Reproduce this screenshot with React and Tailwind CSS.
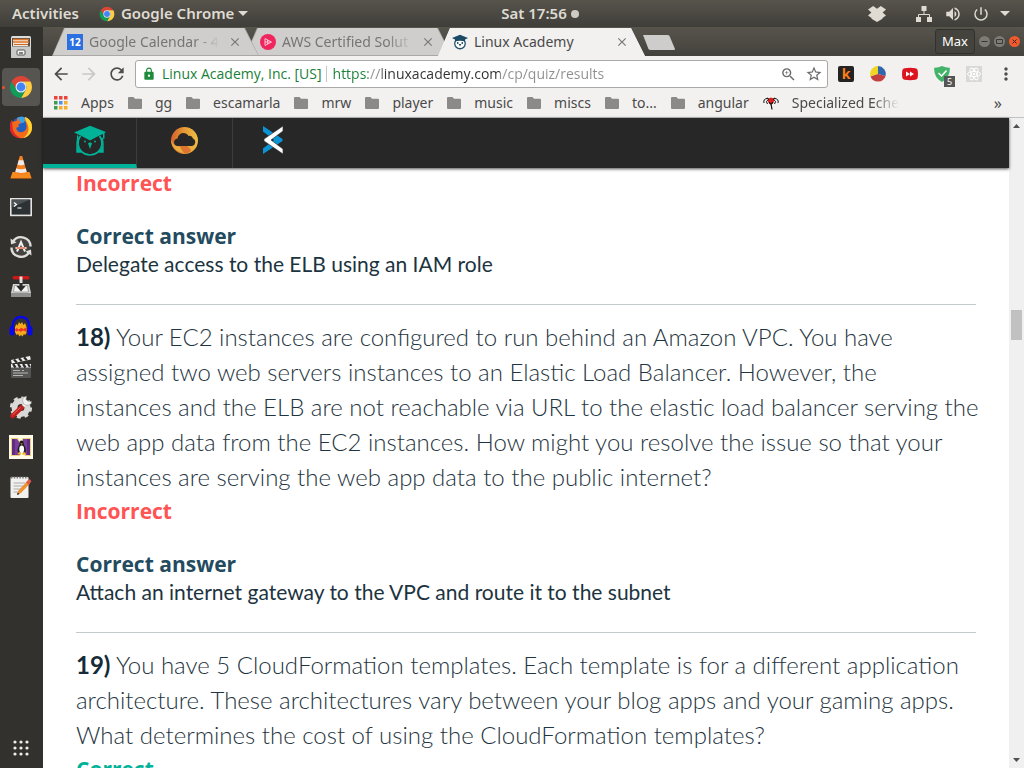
import React from "react";
import { MdArrowBack, MdArrowForward, MdRefresh, MdLock, MdStarBorder, MdZoomIn, MdClose, MdMoreVert, MdPowerSettingsNew, MdVolumeUp } from "react-icons/md";

function ChromeIcon({ className }) {
  const arc = "M24 13H43.05A22 22 0 0 0 4.95 13L14.47 29.5A11 11 0 0 1 24 13z";
  return (
    <svg viewBox="0 0 48 48" className={className} aria-hidden="true">
      <path d={arc} fill="#db4437" />
      <path d={arc} fill="#ffcd40" transform="rotate(120 24 24)" />
      <path d={arc} fill="#0f9d58" transform="rotate(240 24 24)" />
      <circle cx="24" cy="24" r="11" fill="#f1f1f1" />
      <circle cx="24" cy="24" r="8.8" fill="#4285f4" />
    </svg>
  );
}

function Icon({ size = "size-6", box = "0 0 24 24", children }) {
  return (
    <svg viewBox={box} className={`${size} shrink-0`} aria-hidden="true">
      {children}
    </svg>
  );
}

const dock = [
  {
    name: "Files",
    icon: (
      <Icon>
        <rect x="2" y="1" width="20" height="22" rx="1.5" fill="#dcdcda" />
        <rect x="3" y="3" width="18" height="8.5" fill="#55504a" />
        <path d="M4 5h15v6H4z" fill="#f4e6d2" />
        <path d="M4 4.5h16M4 7h16" stroke="#e0762c" strokeWidth="1.5" />
        <path d="M5 9.500h14" stroke="#c96a2c" />
        <rect x="2" y="12" width="20" height="11" rx="1" fill="#c9c9c7" />
        <rect x="8" y="15" width="8" height="5" rx="1" fill="#f4f4f4" stroke="#555" />
        <path d="M10 18h4" stroke="#444" strokeWidth="1.3" />
      </Icon>
    ),
  },
  { name: "Google Chrome", active: true, icon: <ChromeIcon className="size-6" /> },
  {
    name: "Firefox",
    icon: (
      <Icon>
        <circle cx="12.5" cy="11" r="9.500" fill="#1f5fc4" />
        <path d="M8 3c3-2 7-1.5 9 .5l-2 4-4 1z" fill="#35a5ea" />
        <path d="M16 2c5 2 7.5 6 7 11.500C22.400 19.500 17.500 23.300 12 23.300S1.500 19 1 13c-.2-3.200.6-6 2-8l.8 2.200C5 6 6.300 5.700 7.500 6c.2-1.600 1-2.700 2.200-3.200-.4 2 .3 3.400 2.300 4.200.3 1.200-2.200 1.600-2.500 2.700-.1 1 .6 1.600.2 2.600-1.200-.2-2 0-2.400 1 .5 2.700 2.700 4.200 5.200 3.900 3-.3 5-2.600 5-5.700C17.500 8 16 6 15.500 5z" fill="#f26a1b" />
        <path d="M16 2c5 2 7.500 6 7 11.500-.5 5-4 8.800-9 9.600 3.500-2 5.500-5.500 5.500-9.600C19.500 9 16 6 16 2z" fill="#ffd22e" />
        <path d="M1 13c.3 6 5 10.300 11 10.300-4-2-8-5-8.500-11L3 5C1.600 7.200.9 10 1 13z" fill="#e2232e" />
      </Icon>
    ),
  },
  {
    name: "VLC media player",
    icon: (
      <Icon>
        <path d="M3.500 17h17l2 6h-21z" fill="#f58a1f" />
        <path d="M10.800 1h2.400l5 17.500c-2 2-10.400 2-12.400 0z" fill="#f58220" />
        <path d="M9.700 5.200h4.600l1.200 4.200c-1.500 1-5.500 1-7 0zM7.300 13.200c2 1.300 7.400 1.300 9.400 0l1 3.500c-2.400 1.600-9 1.600-11.400 0z" fill="#ececec" />
        <path d="M1.500 23h21v.8h-21z" fill="#b85a0c" />
      </Icon>
    ),
  },
  {
    name: "Terminal",
    icon: (
      <Icon>
        <rect x="1.800" y="3.800" width="20.400" height="16.600" fill="#2c3133" stroke="#e4e4e2" strokeWidth="1.600" />
        <path d="M2.600 4.600h18.800l-18.800 8z" fill="#4c5254" />
        <path d="M5 7.500l2.500 2L5 11.500M8.500 13h4" stroke="#fff" strokeWidth="1.200" fill="none" />
      </Icon>
    ),
  },
  {
    name: "Software Updater",
    icon: (
      <Icon>
        <circle cx="12" cy="12" r="9" fill="#45433f" />
        <path d="M4 6.500a9.600 9.600 0 0 1 17.600 5M20 17.500A9.600 9.600 0 0 1 2.400 12.500" stroke="#dededc" strokeWidth="2.400" fill="none" />
        <path d="M1.500 3.500l.5 6 5.500-2zM22.500 20.500l-.5-6-5.500 2z" fill="#dededc" />
        <path d="M8 16.500l4-9.500 4 9.500" stroke="#eee" strokeWidth="2" fill="none" />
        <path d="M6.500 13h11" stroke="#eee" strokeWidth="2" />
        <path d="M7.500 13h9" stroke="#df4b20" strokeWidth="1.200" />
      </Icon>
    ),
  },
  {
    name: "Disk Recovery",
    icon: (
      <Icon>
        <path d="M4 9h16l2 9v4H2v-4z" fill="#d6d6d4" />
        <path d="M2 18h20v4H2z" fill="#8f8f8d" />
        <path d="M5.500 10.500h13l1 6.500h-15z" fill="#f3f3f1" stroke="#777" strokeWidth=".6" />
        <rect x="3.500" y="1" width="17" height="3.500" rx="1.700" fill="#c81818" />
        <path d="M10.500 4h3v7h3.200L12 16.500 7.300 11h3.200z" fill="#2b2b2b" />
        <path d="M10.500 1.500h3V8h-3z" fill="#ddd" />
      </Icon>
    ),
  },
  {
    name: "Audacity",
    icon: (
      <Icon>
        <path d="M4 13C3 6 7 2 12 2s9 4 8 11" stroke="#0808e8" strokeWidth="2.400" fill="none" />
        <path d="M6 12l1.500-3 1 1.500L10 7l1.500 2L13 7l1.500 3L16 8l1.500 4v6L16 20l-1-1-1.500 2.500L12 20l-1.500 1.500L9 19l-1.500 1L6 17z" fill="#f5a81c" />
        <path d="M5.500 15l2-2 2 1.500 3-1.800 2 1.500 2-1.700 2 2.500-2 1.500-2-1-3 1.300-2-1.200-2 1z" fill="#ee3522" />
        <rect x="0.500" y="11" width="5" height="9.500" rx="2.500" fill="#0808e8" />
        <rect x="18.500" y="11" width="5" height="9.500" rx="2.500" fill="#0808e8" />
      </Icon>
    ),
  },
  {
    name: "Video Editor",
    icon: (
      <Icon>
        <path d="M2 5l19-4 .8 3.500-19 4z" fill="#f0f0ee" />
        <path d="M5 4.400l2.800 3M10 3.300l2.800 3M15 2.200l2.800 3" stroke="#2a2a2a" strokeWidth="2.200" />
        <rect x="2" y="9" width="20" height="14" rx="1" fill="#555653" />
        <path d="M2 9h20v3.500H2z" fill="#f0f0ee" />
        <path d="M4 9l2.500 3.500M9 9l2.500 3.500M14 9l2.500 3.500M19 9l2 3" stroke="#2a2a2a" strokeWidth="2.200" />
        <path d="M4 15.500h7M13 15.500h2M4 18h15M4 20.500h10" stroke="#c2c2c0" strokeWidth=".9" />
      </Icon>
    ),
  },
  {
    name: "System Settings",
    icon: (
      <Icon>
        <circle cx="12" cy="12.500" r="6.500" fill="none" stroke="#d9d9d7" strokeWidth="6" />
        <circle cx="12" cy="12.500" r="9.800" fill="none" stroke="#d9d9d7" strokeWidth="2.600" strokeDasharray="4 3.700" />
        <path d="M10.500 14.500L18 7" stroke="#f2f2f0" strokeWidth="3.200" />
        <path d="M22.500 6.500a4.500 4.500 0 1 1-5-5.200L17 4.500l2 2z" fill="#f2f2f0" stroke="#8a8a88" strokeWidth=".5" />
        <path d="M3.500 21l9-8.500" stroke="#c41d1d" strokeWidth="4.600" strokeLinecap="round" />
        <path d="M3.500 20l8-7.500" stroke="#ea6a5f" strokeWidth="1" />
      </Icon>
    ),
  },
  {
    name: "NetBeans Linux",
    icon: (
      <Icon>
        <path d="M0 0h24v24H0z" fill="#fffbe9" />
        <path d="M2 3h7l2 4v14H2zM13 3h9v18h-6l-3-5z" fill="#f0cf7e" />
        <path d="M3 4h5l3 4v12H3zM14 4h7v16h-4l-3-5z" fill="#7a3d9a" />
        <path d="M3 4h3v16H3zM18 4h3v16h-3z" fill="#5d2b80" />
        <path d="M12.500 5.500c2 0 2.300 2 2.300 4 1.700 2.500 2.700 5 1.700 8h-7.500c-1-3 0-5.500 1.500-8 0-2 .2-4 2-4z" fill="#1c1c1c" />
        <ellipse cx="12.700" cy="14.300" rx="2.400" ry="3.700" fill="#fff" />
        <path d="M8.500 18.800l2-2 2 2.200-1.500 1zM17 18.800l-2-2-2 2.200 1.500 1zM11.300 8.500h2.500l-1.200 1.300z" fill="#f4b51e" />
      </Icon>
    ),
  },
  {
    name: "Text Editor",
    icon: (
      <Icon>
        <rect x="1.500" y="2" width="18" height="21" rx="1" fill="#f1f1ef" />
        <path d="M2 2.500h17" stroke="#777" strokeWidth="2" strokeDasharray="1.500 1.300" />
        <path d="M4.500 8h12M4.500 11h10M4.500 14h8M4.500 17h6" stroke="#aaaaa8" />
        <path d="M8 20l1.500-4.500 9-9.500 2.500 2.500-9 9.500z" fill="#ef9231" />
        <path d="M17 7.300l2.500-2.700c1-1 3.400 1.200 2.500 2.300L19.500 9.700z" fill="#e05a4c" />
        <path d="M8 20l.8-2.500 1.700 1.600z" fill="#222" />
      </Icon>
    ),
  },
];

const bookmarks = ["gg", "escamarla", "mrw", "player", "music", "miscs", "to...", "angular"];

function AcademyFavicon() {
  return (
    <Icon size="size-4" box="0 0 32 32">
      <circle cx="16" cy="19" r="10.500" fill="#fff" stroke="#26506b" strokeWidth="2.600" />
      <path d="M0 8l16-6.500L32 8l-6 3v4c-6-2-14-2-20 0v-4z" fill="#1c4a66" />
      <circle cx="11.500" cy="18" r="1.800" fill="#1c4a66" />
      <circle cx="20.500" cy="18" r="1.800" fill="#1c4a66" />
      <path d="M13.500 20h5L16 25z" fill="#1c4a66" />
    </Icon>
  );
}

const tabs = [
  {
    title: "Google Calendar - 4",
    z: "z-20",
    icon: (
      <span className="flex size-4 shrink-0 items-center justify-center bg-[#2a70e0] text-[10px] leading-4 font-bold text-white">12</span>
    ),
  },
  {
    title: "AWS Certified Solut",
    z: "z-10",
    icon: (
      <Icon size="size-4" box="0 0 16 16">
        <circle cx="8" cy="8" r="8" fill="#f0245e" />
        <path d="M5 4.500L11.500 8 5 11.500zM5 8h6M7.500 6v4" fill="none" stroke="#ffc3d3" />
      </Icon>
    ),
  },
  { title: "Linux Academy", active: true, z: "z-30", icon: <AcademyFavicon /> },
];

function Tab({ title, icon, active, z }) {
  return (
    <div
      className={`relative -mr-[14px] h-7 w-[207px] [clip-path:polygon(0_100%,12px_0,calc(100%-14px)_0,100%_100%)] ${z} ${active ? "bg-[#f2f1f0]" : "bg-[#a9a8a6] px-px pb-px"}`}
    >
      <div
        role="tab"
        aria-selected={!!active}
        className={`flex h-full items-center pl-[14px] pr-4 [clip-path:polygon(0_100%,12px_0,calc(100%-14px)_0,100%_100%)] ${active ? "bg-[#f2f1f0] text-[#4a4a4a]" : "bg-[#d0cecc] text-[#777573]"}`}
      >
        {icon}
        <span
          className={`ml-1.5 flex-1 overflow-hidden text-sm whitespace-nowrap ${active ? "" : "[mask-image:linear-gradient(to_right,#000_80%,transparent)]"}`}
        >
          {title}
        </span>
        <button aria-label={`Close ${title}`} className="ml-2 text-[#777]">
          <MdClose className="size-3.5" />
        </button>
      </div>
    </div>
  );
}

function TopBar() {
  return (
    <header className="grid h-[27px] shrink-0 grid-cols-[1fr_auto_1fr] items-center bg-linear-to-b from-[#57544c] to-[#403e39] text-[15px] font-semibold text-[#dfdbd2]">
      <div className="flex items-center">
        <button className="ml-3">Activities</button>
        <button className="ml-5 flex items-center">
          <ChromeIcon className="mr-1.5 size-4" />
          Google Chrome
          <Icon size="ml-1 h-[5px] w-2.5" box="0 0 10 5">
            <path d="M0 0h10L5 5z" fill="#dfdbd2" />
          </Icon>
        </button>
      </div>
      <button className="ml-14 flex items-center gap-1">
        Sat 17:56 <span className="size-2 rounded-full bg-[#cfcbc3]" />
      </button>
      <div className="flex items-center justify-end pr-3.5">
        <button aria-label="Dropbox" className="mr-[30px]">
          <Icon size="h-4 w-[18px]" box="0 0 18 16">
            <path d="M5.200 0L9 2.700 12.800 0 18 3.500 14.600 6.500 18 9.600 14.500 12v.8L9 16l-5.500-3.200V12L0 9.600l3.400-3.100L0 3.500z" fill="#dfdbd2" />
          </Icon>
        </button>
        <button aria-label="Network" className="mr-3">
          <Icon size="size-4" box="0 0 16 16">
            <path d="M5.500 0h5v5h-5zM0 11h5v5H0zM11 11h5v5h-5z" fill="#dfdbd2" />
            <path d="M8 5v3M2.500 11V8.500h11V11" stroke="#dfdbd2" fill="none" />
          </Icon>
        </button>
        <button aria-label="Volume" className="mr-2.5">
          <MdVolumeUp className="size-[18px]" />
        </button>
        <button aria-label="Power" className="mr-2.5">
          <MdPowerSettingsNew className="size-[18px]" />
        </button>
        <Icon size="h-[5px] w-2.5" box="0 0 10 5">
          <path d="M0 0h10L5 5z" fill="#dfdbd2" />
        </Icon>
      </div>
    </header>
  );
}

function Dock() {
  return (
    <nav aria-label="Dock" className="flex w-[43px] shrink-0 flex-col bg-[#33312d]">
      {dock.map(({ name, icon, active }) => (
        <div key={name} className="flex h-10 shrink-0 items-center pl-0.5">
          <button
            aria-label={name}
            className={`relative flex size-[38px] items-center justify-center rounded-sm ${active ? "bg-[#575551]" : ""}`}
          >
            {active && <span className="absolute top-[18px] left-0 size-[3px] rounded-full bg-[#e95420]" />}
            {icon}
          </button>
        </div>
      ))}
      <button aria-label="Show Applications" className="mt-auto mb-3 ml-[13px] self-start">
        <Icon size="size-4" box="0 0 16 16">
          {[2, 8, 14].map((y) => [2, 8, 14].map((x) => <circle key={`${x}-${y}`} cx={x} cy={y} r="1.600" fill="#efeeec" />))}
        </Icon>
      </button>
    </nav>
  );
}

function TabStrip() {
  return (
    <div className="flex h-[29px] items-end bg-linear-to-b from-[#57544c] to-[#44423d] pl-[9px]">
      <div role="tablist" className="flex">
        {tabs.map((t) => (
          <Tab key={t.title} {...t} />
        ))}
      </div>
      <button aria-label="New tab" className="mb-1.5 ml-3">
        <Icon size="h-[15px] w-8" box="0 0 32 15">
          <path d="M0 0h24.500q1.500 0 2 1L32 14q0 1-1 1H7.500q-1.500 0-2-1z" fill="#cfcdcb" />
        </Icon>
      </button>
      <div className="ml-auto flex items-center gap-1 self-center pr-1">
        <button className="h-[25px] w-10 rounded-[3px] border border-[#33312d] bg-[#45433e] text-[13px] text-white">Max</button>
        <button aria-label="Minimize">
          <Icon size="size-[11px]" box="0 0 11 11">
            <circle cx="5.500" cy="5.500" r="5.500" fill="#7d7b75" />
            <path d="M2.500 5.500h6" stroke="#3a3935" />
          </Icon>
        </button>
        <button aria-label="Maximize">
          <Icon size="size-[11px]" box="0 0 11 11">
            <circle cx="5.500" cy="5.500" r="5.500" fill="#7d7b75" />
            <path d="M2.500 3.500h6v4h-6z" fill="none" stroke="#3a3935" />
          </Icon>
        </button>
        <button aria-label="Close window">
          <Icon size="size-[11px]" box="0 0 11 11">
            <circle cx="5.500" cy="5.500" r="5.500" fill="#ef5a2f" />
            <path d="M3.500 3.500l4 4M7.500 3.500l-4 4" stroke="#43201a" />
          </Icon>
        </button>
      </div>
    </div>
  );
}

function Toolbar() {
  return (
    <div className="flex h-9 items-center bg-[#f2f1f0] pr-2.5 pl-2 text-[#4d4d4d]">
      <button aria-label="Back" className="mr-2"><MdArrowBack className="size-5" /></button>
      <button aria-label="Forward" className="mr-2 text-[#c9c8c7]"><MdArrowForward className="size-5" /></button>
      <button aria-label="Reload" className="mr-2"><MdRefresh className="size-5" /></button>
      <div className="flex h-7 min-w-0 flex-1 items-center rounded-[3px] border border-[#a9a8a7] bg-white pr-1 pl-1.5 font-['Open_Sans',sans-serif] text-sm">
        <MdLock className="size-3.5 shrink-0 text-[#1f8a3b]" />
        <button className="ml-1.5 border-r border-[#c4c4c4] pr-1 leading-4 whitespace-nowrap text-[#1a8038]">Linux Academy, Inc. [US]</button>
        <input
          aria-label="Address and search bar"
          defaultValue="https://linuxacademy.com/cp/quiz/results"
          className="ml-1.5 min-w-0 flex-1 bg-[linear-gradient(to_right,#1a8038_35px,#8f8f8f_35px,#8f8f8f_49px,#303030_49px,#303030_167px,#8f8f8f_167px)] bg-clip-text text-transparent outline-none"
        />
        <button aria-label="Zoom" className="mr-2 text-[#6a6a6a]"><MdZoomIn className="size-[17px]" /></button>
        <button aria-label="Bookmark this page" className="text-[#6a6a6a]"><MdStarBorder className="size-[18px]" /></button>
      </div>
      <div className="ml-2.5 flex items-center gap-4">
        <button aria-label="Keepa" className="flex size-4 items-center justify-center rounded-xs bg-[#232323] text-sm leading-4 font-bold text-[#ff7d14]">k</button>
        <button aria-label="Color chart">
          <Icon size="size-4" box="0 0 16 16">
            <path d="M8 8V0a8 8 0 0 1 7.500 10z" fill="#2f66ad" />
            <path d="M8 8V0A8 8 0 0 0 .5 10.500z" fill="#f0d622" />
            <path d="M8 8l7.600 2A8 8 0 0 1 .5 10.500z" fill="#c33f3f" />
          </Icon>
        </button>
        <button aria-label="Video speed">
          <Icon size="size-4" box="0 0 16 16">
            <path d="M2.500 2.200q5.500-.8 11 0 2 .3 2.200 2.300.5 3.500 0 7-.2 2-2.200 2.300-5.500.8-11 0-2-.3-2.200-2.300-.5-3.500 0-7 .2-2 2.200-2.300z" fill="#dc1420" />
            <path d="M4 5.500L8 8l-4 2.500zM8 5.500L12 8l-4 2.500z" fill="#fff" />
          </Icon>
        </button>
        <button aria-label="Ad blocker, 5 blocked" className="relative">
          <Icon size="size-4" box="0 0 16 16">
            <path d="M8 0q4 2 7.800 1.800Q16.500 11 8 16-.5 11 .2 1.800 4 2 8 0z" fill="#43b36a" />
            <path d="M4.500 7l3 3 5-5.500" stroke="#fff" strokeWidth="1.500" fill="none" />
          </Icon>
          <span className="absolute top-2.5 left-2.5 h-[11px] w-[11px] bg-[#565656] text-center text-[9px] leading-[11px] text-white">5</span>
        </button>
        <button aria-label="React Developer Tools">
          <Icon size="size-4" box="0 0 16 16">
            <path d="M0 0h16v16H0z" fill="#d8d8d7" />
            <g fill="none" stroke="#fff">
              <ellipse cx="8" cy="8" rx="6.500" ry="2.600" />
              <ellipse cx="8" cy="8" rx="6.500" ry="2.600" transform="rotate(60 8 8)" />
              <ellipse cx="8" cy="8" rx="6.500" ry="2.600" transform="rotate(120 8 8)" />
            </g>
            <circle cx="8" cy="8" r="1.300" fill="#fff" />
          </Icon>
        </button>
        <button aria-label="Menu" className="flex w-4 justify-center"><MdMoreVert className="size-5 shrink-0" /></button>
      </div>
    </div>
  );
}

function Bookmarks() {
  const grid = ["#e8453c", "#e8453c", "#e8453c", "#3f9b4f", "#4b8df0", "#f5ad2e", "#3f9b4f", "#f5ad2e", "#f5ad2e"];
  return (
    <div className="flex h-[26px] items-center gap-3.5 border-b border-[#c4c3c2] bg-[#f2f1f0] pr-[22px] pb-1 pl-[11px] text-sm whitespace-nowrap text-[#4a4a4a]">
      <button className="flex items-center gap-[13px]">
        <Icon size="size-3.5" box="0 0 14 14">
          {grid.map((fill, i) => (
            <rect key={i} x={(i % 3) * 5} y={Math.floor(i / 3) * 5} width="3.500" height="3.500" fill={fill} />
          ))}
        </Icon>
        Apps
      </button>
      {bookmarks.map((b) => (
        <button key={b} className="flex items-center gap-[13px]">
          <Icon size="h-3 w-3.5" box="0 0 14 12">
            <path d="M1 0h4.500L7 1.800h6q1 0 1 1V11q0 1-1 1H1q-1 0-1-1V1q0-1 1-1z" fill="#8b8a89" />
          </Icon>
          {b}
        </button>
      ))}
      <button className="flex items-center gap-[13px]">
        <Icon size="size-4" box="0 0 16 16">
          <path d="M1 8Q0 4 4 3.500M4.500 9Q2 6 5 5M15 8q1-4-3-4.500M11.500 9Q14 6 11 5" stroke="#111" fill="none" />
          <path d="M4.500 5.500Q5 3 8 2.500q3 .5 3.500 3L9.500 9h-3z" fill="#d31919" />
          <path d="M4 3l2 1.500M12 3l-2 1.500M6 7l2 2.500L10 7M8 9l1 5.500" stroke="#111" strokeWidth="1.200" fill="none" />
          <circle cx="8" cy="5.500" r="2" fill="#e22222" />
        </Icon>
        <span className="[mask-image:linear-gradient(to_right,#000_75%,transparent)]">Specialized Eche</span>
      </button>
      <button aria-label="More bookmarks" className="ml-auto text-base leading-4">»</button>
    </div>
  );
}

function SiteNav() {
  return (
    <nav aria-label="Products" className="relative z-10 flex h-[50px] shrink-0 bg-[#272727] shadow-[0_1px_3px_rgba(0,0,0,0.7)]">
      <a href="#academy" aria-label="Linux Academy" className="flex w-[94px] justify-center border-r border-b-4 border-r-[#3d3d3d] border-b-[#00b398] pt-[7px]">
        <Icon size="h-[31px] w-8" box="0 0 32 31">
          <path d="M0 7.500L16 .8 32 7 30.500 8v5.500h-1.500V9l-5 2.200L16 15.500 8 11.200z" fill="#00b398" />
          <path d="M3.200 10.500c1.500 1.500-.2 5-.2 8v8.500h4.500" fill="none" stroke="#00b398" strokeWidth="1.400" />
          <path d="M28.800 13c-.8 2 .2 3 .2 6v8h-4.500" fill="none" stroke="#00b398" strokeWidth="1.400" />
          <path d="M6.500 11a12 11.800 0 1 0 19 0" fill="none" stroke="#00b398" strokeWidth="1.700" />
          <path d="M3 21q1.500 4 5 6H3zM29 21q-1.500 4-5 6h5z" fill="#00b398" />
          <path d="M14 18.200l2-1 2 1-2 5.800z" fill="#00b398" />
          <circle cx="11" cy="16.500" r=".9" fill="#00b398" />
          <circle cx="21" cy="16.500" r=".9" fill="#00b398" />
        </Icon>
      </a>
      <a href="#assessments" aria-label="Cloud Assessments" className="flex w-24 justify-center border-r border-[#3d3d3d] pt-[9px]">
        <Icon size="size-[27px]" box="0 0 27 27">
          <defs>
            <linearGradient id="cloudRing" x1="0" y1="0" x2="1" y2="0">
              <stop offset="0" stopColor="#d4602b" />
              <stop offset="0.500" stopColor="#e69a35" />
              <stop offset="1" stopColor="#edbf45" />
            </linearGradient>
          </defs>
          <circle cx="13.500" cy="13.500" r="13.500" fill="url(#cloudRing)" />
          <path d="M2 9q-3 7 3 10l6 1 3 6Q2 25 .3 15z" fill="#e8b03f" />
          <path d="M9 19h7q4 3 4 5-3 2.500-6 2.700-4-3-5-7.700z" fill="#dd7430" />
          <path d="M7 19q-4-.3-4-4 .3-3 3.500-3.500Q7.500 6.500 12 6q4 0 5.500 3 3.500-.8 4.500 2.500 2.500 1 2.300 4-.5 3-3.300 3.500z" fill="#272727" />
        </Icon>
      </a>
      <a href="#exchange" aria-label="Exchange" className="flex w-20 justify-center pt-2">
        <Icon size="h-7 w-5" box="0 0 20 28">
          <path d="M0 0L19.500 13v2L0 28v-5.500L11 14 0 5.500z" fill="#0b93d5" />
          <path d="M20 0L1 13v2l19 13v-5L8 14l12-9z" fill="#fff" stroke="#272727" strokeWidth=".6" />
        </Icon>
      </a>
    </nav>
  );
}

const verdictFont = "font-['Open_Sans',sans-serif] font-bold";

function Answer({ children }) {
  return (
    <>
      <h3 className={`mt-[26px] text-[#234b60] ${verdictFont}`}>Correct answer</h3>
      <p className="text-[#1c3440]">{children}</p>
      <hr className="mt-[27px] mb-3.5 border-[#c3cacb]" />
    </>
  );
}

function Question({ number, children }) {
  return (
    <p className="mb-1 text-2xl leading-[35px] font-light whitespace-nowrap text-[#1f3541]">
      <strong className="font-bold text-[#152c38]">{number})</strong> {children}
    </p>
  );
}

function Results() {
  return (
    <main className="min-h-0 flex-1 overflow-hidden bg-white px-[33px] pt-0.5 font-[Lato,sans-serif] text-[21px] leading-[27px]">
      <p className={`text-[#ff5455] ${verdictFont}`}>Incorrect</p>
      <Answer>Delegate access to the ELB using an IAM role</Answer>
      <Question number={18}>
        Your EC2 instances are configured to run behind an Amazon VPC. You have<br />
        assigned two web servers instances to an Elastic Load Balancer. However, the<br />
        instances and the ELB are not reachable via URL to the elastic load balancer serving the<br />
        web app data from the EC2 instances. How might you resolve the issue so that your<br />
        instances are serving the web app data to the public internet?
      </Question>
      <p className={`text-[#ff5455] ${verdictFont}`}>Incorrect</p>
      <Answer>Attach an internet gateway to the VPC and route it to the subnet</Answer>
      <Question number={19}>
        You have 5 CloudFormation templates. Each template is for a different application<br />
        architecture. These architectures vary between your blog apps and your gaming apps.<br />
        What determines the cost of using the CloudFormation templates?
      </Question>
      <p className={`text-[#00b398] ${verdictFont}`}>Correct</p>
    </main>
  );
}

function Scrollbar() {
  return (
    <div className="flex w-[15px] shrink-0 flex-col items-center bg-[#f0f0f0]">
      <Icon size="mt-1.5 h-1 w-[7px]" box="0 0 7 4">
        <path d="M0 4h7L3.500 0z" fill="#505050" />
      </Icon>
      <div className="flex w-[11px] flex-1 flex-col">
        <div className="grow-[182]" />
        <div className="h-[30px] bg-[#c1c1c1]" />
        <div className="grow-[418]" />
      </div>
      <Icon size="mb-1.5 h-1 w-[7px]" box="0 0 7 4">
        <path d="M0 0h7L3.500 4z" fill="#505050" />
      </Icon>
    </div>
  );
}

export default function App() {
  return (
    <div className="flex h-screen flex-col overflow-hidden font-['Noto_Sans',sans-serif]">
      <TopBar />
      <div className="flex min-h-0 flex-1">
        <Dock />
        <div className="flex min-w-0 flex-1 flex-col">
          <TabStrip />
          <Toolbar />
          <Bookmarks />
          <div className="flex min-h-0 flex-1">
            <div className="flex min-w-0 flex-1 flex-col">
              <SiteNav />
              <Results />
            </div>
            <Scrollbar />
          </div>
        </div>
      </div>
    </div>
  );
}
